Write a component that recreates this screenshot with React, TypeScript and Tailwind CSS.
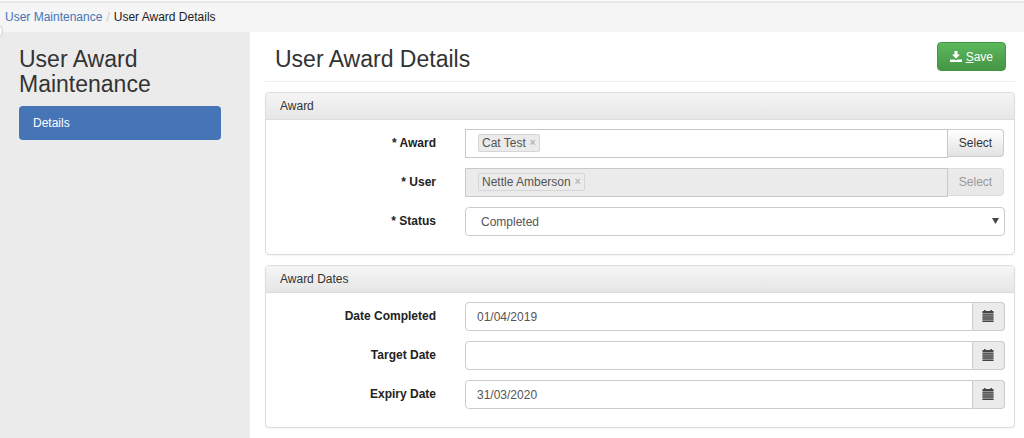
import { useState } from "react";
import type { ReactNode } from "react";

const SaveIcon = () => (
  <svg width="12" height="12" viewBox="0 0 12 12" fill="currentColor" aria-hidden="true">
    <path d="M4.5 0h3v3.6H10L6 7.8 2 3.6h2.5z" />
    <path d="M0 8.4h4.6L6 9.6l1.4-1.2H12V11H0z" />
  </svg>
);

const CalendarIcon = () => (
  <svg width="12" height="12" viewBox="0 0 12 12" fill="#444" aria-hidden="true">
    <path d="M.5 1H2V0h1.5v1h5V0H10v1h1.5v2.4H.5z" />
    <path d="M.5 4.2h11V12H.5z" fill="#8c8c8c" />
    <path d="M.5 4.2h11v1H.5zM.5 6.4h11v1H.5zM.5 8.6h11v1H.5zM.5 10.9h11V12H.5z" />
  </svg>
);

interface PanelProps {
  title: string;
  children: ReactNode;
}

function Panel({ title, children }: PanelProps) {
  return (
    <section className="rounded border border-[#ddd] bg-white shadow-xs">
      <h2 className="rounded-t border-b border-[#ddd] bg-linear-to-b from-[#f5f5f5] to-[#e6e6e6] px-[14px] leading-[26px] text-[#333]">
        {title}
      </h2>
      <div className="flex flex-col gap-[10px] px-[9px] pt-[9px] pb-[18px]">{children}</div>
    </section>
  );
}

interface FieldProps {
  id: string;
  label: string;
  children: ReactNode;
}

function Field({ id, label, children }: FieldProps) {
  return (
    <div className="flex gap-[29px]">
      <label htmlFor={id} className="w-[161px] shrink-0 text-right leading-7 font-bold text-[#222]">
        {label}
      </label>
      <div className="flex h-[29px] min-w-0 flex-1">{children}</div>
    </div>
  );
}

interface PickerFieldProps {
  id: string;
  label: string;
  value: string;
  disabled?: boolean;
}

function PickerField({ id, label, value, disabled = false }: PickerFieldProps) {
  return (
    <Field id={id} label={label}>
      <div
        className={`flex min-w-0 flex-1 items-start border border-[#c8c8c8] px-3 pt-1 ${
          disabled ? "bg-[#ebebeb]" : "bg-white"
        }`}
      >
        <span className="flex h-[18px] items-center gap-1 rounded-xs border border-[#d5d5d5] bg-[#ebebeb] px-[3px] leading-4 text-[#555]">
          {value}
          <button
            type="button"
            disabled={disabled}
            aria-label={`Remove ${value}`}
            className="text-[10px] leading-4 font-bold text-[#b5b5b5]"
          >
            ×
          </button>
        </span>
      </div>
      <button
        id={id}
        type="button"
        disabled={disabled}
        className="mr-px h-7 w-14 rounded-r border border-l-0 border-[#ccc] bg-linear-to-b from-white to-[#e2e2e2] leading-[25px] text-[#333] disabled:border-[#ddd] disabled:from-[#ebebeb] disabled:to-[#e8e8e8] disabled:text-[#999]"
      >
        Select
      </button>
    </Field>
  );
}

interface DateFieldProps {
  id: string;
  label: string;
  initial: string;
}

function DateField({ id, label, initial }: DateFieldProps) {
  const [value, setValue] = useState(initial);
  return (
    <Field id={id} label={label}>
      <input
        id={id}
        type="text"
        value={value}
        onChange={(e) => setValue(e.target.value)}
        className="min-w-0 flex-1 rounded-l border border-[#ccc] bg-white px-[11px] text-[#555]"
      />
      <button
        type="button"
        aria-label={`Pick ${label}`}
        className="flex w-8 items-start rounded-r border border-l-0 border-[#ccc] bg-[#ebebeb] px-[9px] pt-[7px]"
      >
        <CalendarIcon />
      </button>
    </Field>
  );
}

export default function App() {
  const [status, setStatus] = useState("Completed");

  return (
    <div className="flex min-h-screen flex-col overflow-x-hidden bg-white font-['Liberation_Sans',Arial,sans-serif] text-[12px] text-[#333]">
      <header className="relative h-8 border-t border-[#fafafa] bg-[#f5f5f5]">
        <div className="h-[2px] bg-[#e8e8e8]" />
        <nav aria-label="Breadcrumb" className="flex px-[5px] leading-[28px]">
          <a href="#maintenance" className="text-[#4574b5]">
            User Maintenance
          </a>
          <span className="px-1 text-[#ccc]">/</span>
          <span className="text-[#222]">User Award Details</span>
        </nav>
        {/* sidebar toggle, mostly tucked behind the left edge */}
        <span className="absolute top-[22px] -left-[13px] z-10 size-4 rounded-full border border-[#ccc] bg-white" />
      </header>

      <div className="flex flex-1">
        <aside className="w-[250px] shrink-0 bg-[#ebebeb] pt-[15px] pr-[29px] pl-[19px]">
          <h2 className="text-[23px] leading-[25px]">User Award Maintenance</h2>
          <nav className="mt-[9px]">
            <a
              href="#details"
              className="block rounded bg-[#4575b6] px-[14px] leading-[34px] text-white"
            >
              Details
            </a>
          </nav>
        </aside>

        <main className="min-w-0 flex-1 pr-[9px] pb-[10px] pl-[15px]">
          <div className="flex h-[50px] items-start justify-between border-b border-[#eee] pt-[10px] pr-[9px] pl-[10px]">
            <h1 className="pt-[5px] text-[23px] leading-[25px]">User Award Details</h1>
            <button
              type="button"
              accessKey="s"
              className="flex h-[29px] items-center gap-1 rounded border border-[#419641] bg-linear-to-b from-[#5cb85c] to-[#459545] px-3 text-white"
            >
              <SaveIcon />
              <span>
                <u>S</u>ave
              </span>
            </button>
          </div>

          <form className="flex flex-col gap-[10px] pt-[10px]" onSubmit={(e) => e.preventDefault()}>
            <Panel title="Award">
              <PickerField id="award" label="* Award" value="Cat Test" />
              <PickerField id="user" label="* User" value="Nettle Amberson" disabled />
              <Field id="status" label="* Status">
                <div className="relative flex min-w-0 flex-1">
                  <select
                    id="status"
                    value={status}
                    onChange={(e) => setStatus(e.target.value)}
                    className="w-full appearance-none rounded border border-[#ccc] bg-white px-[15px] text-[#555]"
                  >
                    <option>Completed</option>
                    <option>In Progress</option>
                  </select>
                  <svg
                    className="pointer-events-none absolute top-[11px] right-[6px]"
                    width="7"
                    height="6"
                    viewBox="0 0 7 6"
                    fill="#444"
                    aria-hidden="true"
                  >
                    <path d="M0 0h7L3.5 6z" />
                  </svg>
                </div>
              </Field>
            </Panel>

            <Panel title="Award Dates">
              <DateField id="completed" label="Date Completed" initial="01/04/2019" />
              <DateField id="target" label="Target Date" initial="" />
              <DateField id="expiry" label="Expiry Date" initial="31/03/2020" />
            </Panel>
          </form>
        </main>
      </div>
    </div>
  );
}
